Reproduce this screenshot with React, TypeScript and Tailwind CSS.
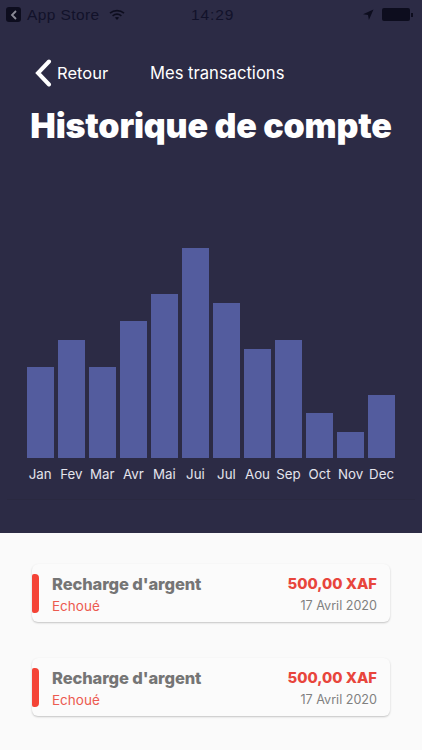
const months: [string, number][] = [
  ["Jan", 91], ["Fev", 118], ["Mar", 91], ["Avr", 137], ["Mai", 164], ["Jui", 210],
  ["Jul", 155], ["Aou", 109], ["Sep", 118], ["Oct", 45], ["Nov", 26], ["Dec", 63],
];

const poppins = "font-['Inter','Liberation_Sans',sans-serif]";

function StatusBar() {
  return (
    <div className="flex h-[29px] items-center pl-[6px] pr-[7px] text-[#12122a] font-['Liberation_Sans',sans-serif] text-[15.5px]">
      <div className="flex h-[15px] w-[15px] items-center justify-center rounded-[3px] bg-[#0d0d1e]">
        <svg width="8" height="10" viewBox="0 0 8 10" fill="none"><path d="M6 1 2 5l4 4" stroke="#8a8a96" strokeWidth="1.8" /></svg>
      </div>
      <span className="ml-[6px] w-[79px] tracking-[0.4px]">App Store</span>
      <svg width="16" height="12" viewBox="0 0 16 12" className="ml-[3px]" fill="none" stroke="#0d0d1e" strokeWidth="1.7">
        <path d="M1 4.2c4-3.4 10-3.4 14 0" />
        <path d="M3.6 6.8c2.6-2 6.2-2 8.8 0" />
        <path d="M8 11 5.8 8.6c1.3-.9 3.1-.9 4.4 0z" fill="#0d0d1e" stroke="none" />
      </svg>
      <span className="ml-[66px] w-[42px] whitespace-nowrap font-medium tracking-[0.9px]">14:29</span>
      <svg width="12" height="12" viewBox="0 0 12 12" className="ml-[129px]"><path d="M11.5.5 1 5.2l5 .9.9 5z" fill="#0d0d1e" /></svg>
      <div className="ml-[8px] h-[13px] w-[28px] rounded-[2px] bg-[#0d0d1e]" />
      <div className="ml-[1px] h-[4px] w-[1.5px] bg-[#0d0d1e]" />
    </div>
  );
}

function Row() {
  return (
    <div className="relative ml-[32px] mr-[32px] flex h-[58px] items-center justify-between rounded-[6px] bg-[#fbfbfb] pl-[20px] pr-[13px] pt-[4px] shadow-[0_1px_2px_rgba(0,0,0,0.22)]">
      <div className="absolute left-0 top-[10px] h-[39px] w-[6.5px] rounded-r-[4px] rounded-l-[2px] bg-[#f44336]" />
      <div className="flex flex-col">
        <span className={`${poppins} whitespace-nowrap text-[16.5px] font-extrabold leading-[22px] tracking-[-0.1px] text-[#757575]`}>Recharge d'argent</span>
        <span className={`${poppins} text-[13.5px] leading-[22px] text-[#ec5a50]`}>Echoué</span>
      </div>
      <div className="flex flex-col items-end">
        <span className={`${poppins} whitespace-nowrap text-[14.8px] font-extrabold leading-[22px] text-[#e8453c]`}>500,00 XAF</span>
        <span className={`${poppins} text-[12.6px] leading-[22px] text-[#808080]`}>17 Avril 2020</span>
      </div>
    </div>
  );
}

export default function App() {
  return (
    <div className="flex h-[750px] w-[422px] flex-col overflow-hidden bg-[#fafafa]">
      <div className="h-[533px] bg-[#2c2b45]">
        <StatusBar />
        <div className="mt-[28px] flex h-[32px] items-center text-white">
          <svg width="18" height="28" viewBox="0 0 18 28" className="ml-[34px]" fill="none"><path d="M15 2.5 4 14l11 11.5" stroke="white" strokeWidth="4" strokeLinecap="round" /></svg>
          <span className={`${poppins} ml-[5px] w-[93px] text-[16.5px]`}>Retour</span>
          <span className={`${poppins} whitespace-nowrap text-[16.6px]`}>Mes transactions</span>
        </div>
        <h1 className={`${poppins} mt-[14px] whitespace-nowrap text-center text-[34px] font-black leading-[46px] tracking-[-0.2px] text-white`}>Historique de compte</h1>
        <div className="mx-[7px] mt-[99px] flex h-[252px] flex-col border-b border-[#2a2940] px-[20px]">
          <div className="flex h-[210px] items-end justify-between">
            {months.map(([m, h]) => (
              <div key={m} className="w-[26.5px] bg-[#535c9e]" style={{ height: h }} />
            ))}
          </div>
          <div className="mt-[8px] flex justify-between">
            {months.map(([m]) => (
              <span key={m} className="flex w-[26.5px] justify-center whitespace-nowrap font-['Inter',sans-serif] text-[13.3px] leading-[16px] text-[#e4e4ec]">{m}</span>
            ))}
          </div>
        </div>
      </div>
      <div className="flex flex-col gap-[36px] pt-[31px]">
        <Row />
        <Row />
      </div>
    </div>
  );
}
